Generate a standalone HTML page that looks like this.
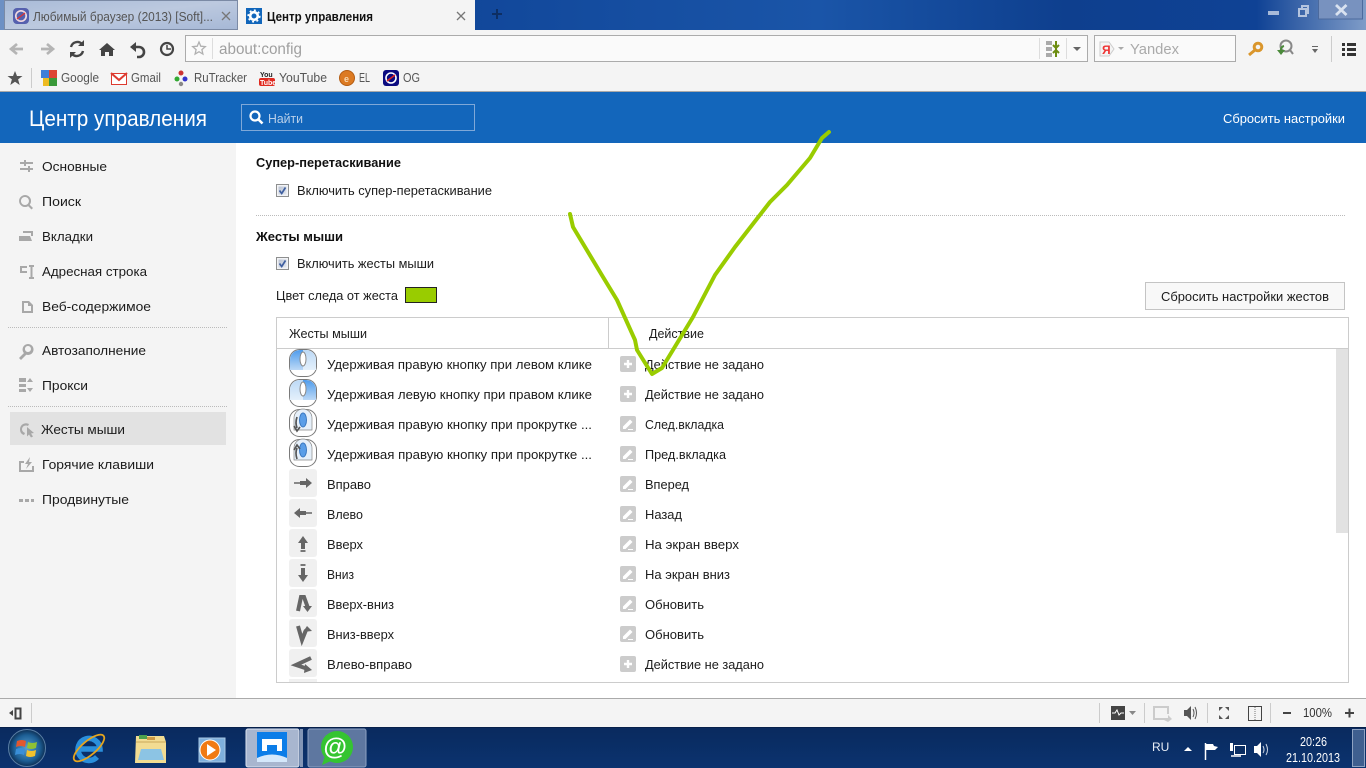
<!DOCTYPE html>
<html lang="ru"><head><meta charset="utf-8"><title>Центр управления</title>
<style>
html,body{margin:0;padding:0;width:1366px;height:768px;overflow:hidden;background:#fff}
svg{display:block}
text{font-family:"Liberation Sans","DejaVu Sans",sans-serif;font-size:13px;fill:#1c1c1c}
.b{font-size:12.5px;fill:#555}
.h{font-weight:bold;font-size:13px;fill:#111}
</style></head><body>
<svg width="1366" height="768" viewBox="0 0 1366 768" xmlns="http://www.w3.org/2000/svg">
<defs>
<linearGradient id="aero" x1="0" x2="1" y1="0" y2="0"><stop offset="0" stop-color="#6d90c4"/><stop offset=".004" stop-color="#6d90c4"/><stop offset=".34" stop-color="#11479a"/><stop offset=".6" stop-color="#1a55a8"/><stop offset=".78" stop-color="#0e3f8e"/><stop offset=".92" stop-color="#0f4295"/><stop offset="1" stop-color="#7f9cc8"/></linearGradient>
<linearGradient id="tab1" x1="0" x2="1" y1="0" y2="1"><stop offset="0" stop-color="#a9bbd8"/><stop offset=".5" stop-color="#bcc9df"/><stop offset="1" stop-color="#a6b8d6"/></linearGradient>
<linearGradient id="tb" x1="0" x2="0" y1="0" y2="1"><stop offset="0" stop-color="#0a2a5e"/><stop offset="1" stop-color="#0b336f"/></linearGradient>
<radialGradient id="orb"><stop offset="0" stop-color="#5aa0d0"/><stop offset=".7" stop-color="#1d5f95"/><stop offset="1" stop-color="#0d2f55"/></radialGradient>
<linearGradient id="m1" x1="0" x2="0" y1="0" y2="1"><stop offset="0" stop-color="#4f9cec"/><stop offset="1" stop-color="#bcd9f6"/></linearGradient>
<linearGradient id="m2" x1="0" x2="0" y1="0" y2="1"><stop offset="0" stop-color="#bcd9f6"/><stop offset="1" stop-color="#e4f0fb"/></linearGradient>
<linearGradient id="ckb" x1="0" x2="1" y1="0" y2="1"><stop offset="0" stop-color="#b9c2d2"/><stop offset="1" stop-color="#e4e8ef"/></linearGradient>
<g id="plus"><rect width="16" height="16" rx="2" fill="#ccc"/><path d="M8 4v8M4 8h8" stroke="#fff" stroke-width="2.4"/></g>
<g id="edit"><rect width="16" height="16" rx="2" fill="#ccc"/><path d="M3 10.500l7-7 2.500 2.500-7 7H3z" fill="#fff"/><path d="M8 13.500h5" stroke="#fff"/></g>
<g id="tile"><rect width="28" height="28" rx="3" fill="#f0f0f0"/></g>
<g id="chk"><rect x=".5" y=".5" width="12" height="12" fill="#f2f3f6" stroke="#8e8f8f"/><rect x="2.500" y="2.500" width="8" height="8" fill="url(#ckb)"/><path d="M3.500 6.500l2.200 3 3.800-6" fill="none" stroke="#3f5fa0" stroke-width="1.700"/></g>
<g id="mouse"><rect x=".5" y=".5" width="27" height="27" rx="10" fill="#fff" stroke="#7a7a7a"/></g>
<g id="oval"><ellipse cx="14" cy="10" rx="3" ry="7" fill="#fff" stroke="#888"/></g>
</defs>

<!-- title / tab strip -->
<rect width="1366" height="30" fill="url(#aero)"/>
<rect x="1318.500" y="-1" width="44" height="20" fill="#7892bf" stroke="#4c6a9d"/>
<path d="M1268 11h11v4h-11z" fill="#a8bad8"/>
<path d="M1299 9h7v7h-7zM1302 9V6h6v7h-2" fill="none" stroke="#b4c4de" stroke-width="2"/>
<path d="M1336 5l10.500 10M1346.500 5l-10.500 10" stroke="#d9e2f0" stroke-width="2.800"/>
<rect x="4.500" y=".5" width="233" height="29" fill="url(#tab1)" stroke="#7b8aa5"/>
<rect x="238" y="0" width="237" height="30" fill="#f4f4f4"/>
<rect x="13" y="8" width="16" height="16" rx="4" fill="#5560ae"/><circle cx="21" cy="16" r="5.200" fill="none" stroke="#f1d9e0" stroke-width="1.700"/><path d="M17 19l8-6" stroke="#d33" stroke-width="1.300"/>
<text x="33" y="21" textLength="180" lengthAdjust="spacingAndGlyphs" style="fill:#555">Любимый браузер (2013) [Soft]...</text>
<path d="M222 12l8 8M230 12l-8 8" stroke="#777" stroke-width="1.300"/>
<rect x="246" y="8" width="16" height="16" fill="#1166bb"/><circle cx="254" cy="16" r="3.800" fill="none" stroke="#fff" stroke-width="2.600"/><circle cx="254" cy="16" r="5.800" fill="none" stroke="#fff" stroke-width="1.600" stroke-dasharray="2 2.500"/>
<text x="267" y="21" textLength="106" lengthAdjust="spacingAndGlyphs" style="font-size:12.5px;fill:#111;font-weight:bold">Центр управления</text>
<path d="M457 12l8 8M465 12l-8 8" stroke="#777" stroke-width="1.300"/>
<path d="M497 9v10M492 14h10" stroke="#0d2e63" stroke-width="2"/>

<!-- nav toolbar -->
<rect y="30" width="1366" height="61" fill="#f4f4f4"/>
<rect y="91" width="1366" height="1" fill="#a9a9a9"/>
<path d="M23 49H13M17 44l-6 5 6 5" fill="none" stroke="#b4b4b4" stroke-width="2.700"/>
<path d="M41 49h10M47 44l6 5-6 5" fill="none" stroke="#b4b4b4" stroke-width="2.700"/>
<path d="M71 47a6.500 6.500 0 0 1 11-3M83 51a6.500 6.500 0 0 1-11 3" fill="none" stroke="#444" stroke-width="2.400"/><path d="M84 40v6h-6zM70 58v-6h6z" fill="#444"/>
<path d="M99 50l8-7 8 7h-2v6h-4v-4h-4v4h-4v-6z" fill="#444"/>
<path d="M132 47h7a5 5 0 0 1 0 10h-2" fill="none" stroke="#444" stroke-width="2.600"/><path d="M130 47l6-5v10z" fill="#444"/>
<circle cx="167" cy="49" r="6" fill="none" stroke="#444" stroke-width="2.200"/><path d="M167 45v4h4" fill="none" stroke="#444" stroke-width="1.500"/>
<rect x="185.500" y="35.500" width="902" height="26" fill="#fafafa" stroke="#ababab"/>
<path d="M199 42l1.800 4.200 4.500.4-3.400 3 1 4.400-3.900-2.300-3.900 2.300 1-4.400-3.400-3 4.500-.4z" fill="none" stroke="#b0b0b0" stroke-width="1.300"/>
<path d="M212.500 38v21M1039.500 38v21M1066.500 38v21" stroke="#ddd"/>
<text x="219" y="54" textLength="83" lengthAdjust="spacingAndGlyphs" style="font-size:16px;fill:#a0a0a0">about:config</text>
<path d="M1046 41h6v4h-6zM1046 47h6v4h-6zM1046 53h6v4h-6z" fill="#aaa"/><path d="M1056 41v16M1053 45l3 3 3-3M1053 53l3-3 3 3" fill="none" stroke="#6c8c10" stroke-width="2"/>
<path d="M1073 47h8l-4 4z" fill="#666"/>
<rect x="1094.500" y="35.500" width="141" height="26" fill="#fafafa" stroke="#ababab"/>
<path d="M1100 42h9l5 7-5 7h-9z" fill="#f4f4f4" stroke="#ccc"/>
<text x="1102" y="54" style="font-size:12px;fill:#e33;font-weight:bold">Я</text>
<path d="M1118 47h6l-3 3z" fill="#aaa"/>
<text x="1130" y="54" textLength="49" lengthAdjust="spacingAndGlyphs" style="font-size:15px;fill:#aaa">Yandex</text>
<circle cx="1258" cy="47" r="3.800" fill="none" stroke="#da962c" stroke-width="3"/><path d="M1255 50l-6 5" stroke="#da962c" stroke-width="3"/>
<circle cx="1286" cy="46" r="5.500" fill="none" stroke="#888" stroke-width="2"/><path d="M1290 50l3 4" stroke="#888" stroke-width="2"/><path d="M1284 46a4 4 0 0 0-3 5" fill="none" stroke="#4a8a3a" stroke-width="2"/><path d="M1277 50h8l-4 5z" fill="#4a8a3a"/>
<path d="M1312 46h6v1h-6zM1312 49h6l-3 4z" fill="#666"/>
<path d="M1331.500 36v26" stroke="#ccc"/>
<path d="M1342 43h3v3h-3zM1347 43h9v3h-9zM1342 48h3v3h-3zM1347 48h9v3h-9zM1342 53h3v3h-3zM1347 53h9v3h-9z" fill="#333"/>
<path d="M15 71l2 5h5.500l-4.400 3.400 1.600 5.600-4.700-3.200-4.700 3.200 1.600-5.600-4.400-3.400h5.500z" fill="#555"/>
<path d="M31.500 68v20" stroke="#ccc"/>
<path d="M41 70h8v8h-8z" fill="#3f7fd8"/><path d="M49 70h8v8h-8z" fill="#dd4433"/><path d="M49 78h8v8h-8z" fill="#3a9a3a"/><path d="M43 78h6v8h-6z" fill="#eebb22"/>
<text x="61" y="82" textLength="38" lengthAdjust="spacingAndGlyphs" class="b">Google</text>
<rect x="111.500" y="73.500" width="15" height="11" fill="#fff" stroke="#dd3b30"/><path d="M111 73l8 7 8-7" fill="none" stroke="#dd3b30" stroke-width="2"/>
<text x="131" y="82" textLength="30" lengthAdjust="spacingAndGlyphs" class="b">Gmail</text>
<circle cx="181" cy="73" r="2.500" fill="#c33"/><circle cx="177" cy="79" r="2.500" fill="#3a3"/><circle cx="185" cy="79" r="2.500" fill="#33c"/><circle cx="181" cy="84" r="2.200" fill="#888"/>
<text x="194" y="82" textLength="53" lengthAdjust="spacingAndGlyphs" class="b">RuTracker</text>
<rect x="259" y="78" width="16" height="8" rx="2" fill="#e02a20"/><text x="260" y="77" style="font-size:7px;fill:#222;font-weight:bold">You</text><text x="260" y="85" style="font-size:7px;fill:#fff;font-weight:bold">Tube</text>
<text x="279" y="82" textLength="48" lengthAdjust="spacingAndGlyphs" class="b">YouTube</text>
<circle cx="347" cy="78" r="7.500" fill="#dc7a22" stroke="#b35c12"/><text x="344" y="82" style="font-size:9px;fill:#f8d8b0;font-weight:bold">e</text>
<text x="359" y="82" textLength="11" lengthAdjust="spacingAndGlyphs" class="b">EL</text>
<rect x="383" y="70" width="16" height="16" rx="3" fill="#0b0b80"/><circle cx="391" cy="78" r="5" fill="none" stroke="#fff" stroke-width="1.600"/><path d="M387 81l8-6" stroke="#d22" stroke-width="1.500"/>
<text x="403" y="82" textLength="17" lengthAdjust="spacingAndGlyphs" class="b">OG</text>

<!-- blue header -->
<rect y="92" width="1366" height="51" fill="#1366bb"/>
<text x="29" y="126" textLength="178" lengthAdjust="spacingAndGlyphs" style="font-size:22px;fill:#fff">Центр управления</text>
<rect x="241.500" y="104.500" width="233" height="26" fill="#1366bb" stroke="#7fa8d8"/>
<circle cx="255" cy="116" r="4.500" fill="none" stroke="#fff" stroke-width="2.200"/><path d="M258.500 119.500l4 4" stroke="#fff" stroke-width="2.600"/>
<text x="268" y="123" textLength="35" lengthAdjust="spacingAndGlyphs" style="font-size:13px;fill:#b9d0ea">Найти</text>
<text x="1223" y="123" textLength="122" lengthAdjust="spacingAndGlyphs" style="fill:#fff">Сбросить настройки</text>

<!-- sidebar -->
<rect y="143" width="236" height="555" fill="#f4f4f4"/>
<rect x="10" y="412" width="216" height="33" fill="#e2e2e2"/>
<path d="M8 327.500h220M8 406.500h220" stroke="#bbb" stroke-dasharray="1 1"/>
<g fill="#a8a8a8" stroke="none">
<path d="M20 162h4v-2h2v2h7v2h-7v2h-2v-2h-4zM20 168h8v-2h2v2h3v2h-3v2h-2v-2h-8z"/>
<path d="M25 195a6 6 0 1 0 .1 0zM25 197a4 4 0 1 1-.1 0z" fill-rule="evenodd"/><path d="M29 204l4 4-1.500 1.500-4-4z"/>
<path d="M23 231h10v5h-2v-3h-8zM19 236h11l2 5H19z"/>
<path d="M20 266h7v2h-5v3h5v2h-7zM29 265h5v2h-1.500v10H34v2h-5v-2h1.500V267H29z"/>
<path d="M22 301h7l4 4v8H22zM24 303v8h7v-5h-3v-3z" fill-rule="evenodd"/>
<path d="M28 344a5.500 5.500 0 1 0 .1 0zM28 346a3 3 0 1 1-.1 0z" fill-rule="evenodd"/><path d="M25 352l-6 6 2 2 6-6z"/>
<path d="M19 378h7v4h-7zM19 384h7v3h-7zM19 389h7v3h-7zM30 378l3 4h-6zM30 392l3-4h-6z"/>
<path d="M20 429a6 6 0 0 1 9-5l-1 2a4 4 0 0 0-6 3c0 2 1 3 3 4l-1 2c-3-1-4-3-4-6z"/><path d="M27 427l7 6-3 .5 2 3-2 1-2-3-2 2z"/>
<path d="M19 461h5v2h-3v7h11v-4h2v6H19z"/><path d="M30 457l-5 7h3l-2 5 6-7h-3z"/>
<path d="M19 499h4v3h-4zM25 499h4v3h-4zM31 499h3v3h-3z"/>
</g>
<text x="42" y="171" textLength="65" lengthAdjust="spacingAndGlyphs">Основные</text>
<text x="42" y="206" textLength="39" lengthAdjust="spacingAndGlyphs">Поиск</text>
<text x="42" y="241" textLength="51" lengthAdjust="spacingAndGlyphs">Вкладки</text>
<text x="42" y="276" textLength="105" lengthAdjust="spacingAndGlyphs">Адресная строка</text>
<text x="42" y="311" textLength="109" lengthAdjust="spacingAndGlyphs">Веб-содержимое</text>
<text x="42" y="355" textLength="104" lengthAdjust="spacingAndGlyphs">Автозаполнение</text>
<text x="42" y="390" textLength="46" lengthAdjust="spacingAndGlyphs">Прокси</text>
<text x="41" y="434" textLength="84" lengthAdjust="spacingAndGlyphs">Жесты мыши</text>
<text x="42" y="469" textLength="112" lengthAdjust="spacingAndGlyphs">Горячие клавиши</text>
<text x="42" y="504" textLength="87" lengthAdjust="spacingAndGlyphs">Продвинутые</text>

<!-- main -->
<text x="256" y="167" textLength="145" lengthAdjust="spacingAndGlyphs" class="h">Супер-перетаскивание</text>
<use href="#chk" x="276" y="184"/>
<text x="297" y="195" textLength="195" lengthAdjust="spacingAndGlyphs">Включить супер-перетаскивание</text>
<path d="M256 215.500h1089" stroke="#bbb" stroke-dasharray="1 1"/>
<text x="256" y="241" textLength="87" lengthAdjust="spacingAndGlyphs" class="h">Жесты мыши</text>
<use href="#chk" x="276" y="257"/>
<text x="297" y="268" textLength="137" lengthAdjust="spacingAndGlyphs">Включить жесты мыши</text>
<text x="276" y="300" textLength="122" lengthAdjust="spacingAndGlyphs">Цвет следа от жеста</text>
<rect x="405.500" y="287.500" width="31" height="15" fill="#99cc00" stroke="#222"/>
<rect x="1145.500" y="282.500" width="199" height="27" fill="#f8f8f8" stroke="#c4c4c4"/>
<text x="1161" y="301" textLength="168" lengthAdjust="spacingAndGlyphs">Сбросить настройки жестов</text>

<!-- table -->
<rect x="276.500" y="317.500" width="1072" height="365" fill="#fff" stroke="#ccc"/>
<path d="M277 348.500h1071M608.500 318v30" stroke="#ccc"/>
<text x="289" y="338" textLength="78" lengthAdjust="spacingAndGlyphs">Жесты мыши</text>
<text x="649" y="338" textLength="55" lengthAdjust="spacingAndGlyphs">Действие</text>
<rect x="1336" y="349" width="12" height="184" fill="#e2e2e2"/>

<!-- row icons -->
<g transform="translate(289 349)"><use href="#mouse"/><path d="M1 21V11A10 10 0 0 1 11 1h3v20z" fill="url(#m1)"/><path d="M14 1h3a10 10 0 0 1 10 10v10H14z" fill="url(#m2)"/><use href="#oval"/></g>
<g transform="translate(289 379)"><use href="#mouse"/><path d="M1 21V11A10 10 0 0 1 11 1h3v20z" fill="url(#m2)"/><path d="M14 1h3a10 10 0 0 1 10 10v10H14z" fill="url(#m1)"/><use href="#oval"/></g>
<g transform="translate(289 409)"><use href="#mouse"/><path d="M5 21V9a9 9 0 0 1 18 0v12z" fill="#e6f0fa" stroke="#888" stroke-width=".7"/><ellipse cx="14" cy="11" rx="3.500" ry="7" fill="#5a9ee8" stroke="#3a78c0"/><path d="M8 8q-2 6 0 11M5 17l3 5 3-4" fill="none" stroke="#555" stroke-width="1.700"/></g>
<g transform="translate(289 439)"><use href="#mouse"/><path d="M5 21V9a9 9 0 0 1 18 0v12z" fill="#e6f0fa" stroke="#888" stroke-width=".7"/><ellipse cx="14" cy="11" rx="3.500" ry="7" fill="#5a9ee8" stroke="#3a78c0"/><path d="M8 20q-2-6 0-11M5 11l3-5 3 4" fill="none" stroke="#555" stroke-width="1.700"/></g>
<use href="#tile" x="289" y="469"/><path d="M294 482h6v2h-6z" fill="#888"/><path d="M300 481h6v-3l6 5-6 5v-3h-6z" fill="#666"/>
<use href="#tile" x="289" y="499"/><path d="M306 512h6v2h-6z" fill="#888"/><path d="M306 511h-6v-3l-6 5 6 5v-3h6z" fill="#666"/>
<use href="#tile" x="289" y="529"/><path d="M301 543h-3l5-7 5 7h-3v6h-4z" fill="#666"/><path d="M300.500 551h5" stroke="#777" stroke-width="2"/>
<use href="#tile" x="289" y="559"/><path d="M300.500 565h5" stroke="#777" stroke-width="2"/><path d="M301 568h4v7h3l-5 7-5-7h3z" fill="#666"/>
<use href="#tile" x="289" y="589"/><path d="M298 611l3-14h3l4 11" fill="none" stroke="#666" stroke-width="4"/><path d="M303 606h9l-4.500 6z" fill="#666"/>
<use href="#tile" x="289" y="619"/><path d="M298 626l4 14 4-10" fill="none" stroke="#666" stroke-width="4"/><path d="M303 632l4-6 5 5z" fill="#666"/>
<use href="#tile" x="289" y="649"/><path d="M311 658l-15 7 12 4" fill="none" stroke="#666" stroke-width="4"/><path d="M305 664l7 6-8 3z" fill="#666"/>
<rect x="289" y="679" width="28" height="3" fill="#f0f0f0"/>

<text x="327" y="369" textLength="265" lengthAdjust="spacingAndGlyphs">Удерживая правую кнопку при левом клике</text>
<text x="327" y="399" textLength="265" lengthAdjust="spacingAndGlyphs">Удерживая левую кнопку при правом клике</text>
<text x="327" y="429" textLength="265" lengthAdjust="spacingAndGlyphs">Удерживая правую кнопку при прокрутке ...</text>
<text x="327" y="459" textLength="265" lengthAdjust="spacingAndGlyphs">Удерживая правую кнопку при прокрутке ...</text>
<text x="327" y="489" textLength="44" lengthAdjust="spacingAndGlyphs">Вправо</text>
<text x="327" y="519" textLength="36" lengthAdjust="spacingAndGlyphs">Влево</text>
<text x="327" y="549" textLength="36" lengthAdjust="spacingAndGlyphs">Вверх</text>
<text x="327" y="579" textLength="27" lengthAdjust="spacingAndGlyphs">Вниз</text>
<text x="327" y="609" textLength="67" lengthAdjust="spacingAndGlyphs">Вверх-вниз</text>
<text x="327" y="639" textLength="67" lengthAdjust="spacingAndGlyphs">Вниз-вверх</text>
<text x="327" y="669" textLength="85" lengthAdjust="spacingAndGlyphs">Влево-вправо</text>

<use href="#plus" x="620" y="356"/><use href="#plus" x="620" y="386"/>
<use href="#edit" x="620" y="416"/><use href="#edit" x="620" y="446"/><use href="#edit" x="620" y="476"/><use href="#edit" x="620" y="506"/><use href="#edit" x="620" y="536"/><use href="#edit" x="620" y="566"/><use href="#edit" x="620" y="596"/><use href="#edit" x="620" y="626"/>
<use href="#plus" x="620" y="656"/>
<text x="645" y="369" textLength="119" lengthAdjust="spacingAndGlyphs">Действие не задано</text>
<text x="645" y="399" textLength="119" lengthAdjust="spacingAndGlyphs">Действие не задано</text>
<text x="645" y="429" textLength="79" lengthAdjust="spacingAndGlyphs">След.вкладка</text>
<text x="645" y="459" textLength="81" lengthAdjust="spacingAndGlyphs">Пред.вкладка</text>
<text x="645" y="489" textLength="44" lengthAdjust="spacingAndGlyphs">Вперед</text>
<text x="645" y="519" textLength="37" lengthAdjust="spacingAndGlyphs">Назад</text>
<text x="645" y="549" textLength="94" lengthAdjust="spacingAndGlyphs">На экран вверх</text>
<text x="645" y="579" textLength="85" lengthAdjust="spacingAndGlyphs">На экран вниз</text>
<text x="645" y="609" textLength="59" lengthAdjust="spacingAndGlyphs">Обновить</text>
<text x="645" y="639" textLength="59" lengthAdjust="spacingAndGlyphs">Обновить</text>
<text x="645" y="669" textLength="119" lengthAdjust="spacingAndGlyphs">Действие не задано</text>

<!-- status bar -->
<rect y="698" width="1366" height="29" fill="#f4f4f4"/>
<rect y="698" width="1366" height="1" fill="#aaa"/>
<path d="M9 713l4-3v6z" fill="#444"/><rect x="15.500" y="708.500" width="5" height="10" fill="none" stroke="#444" stroke-width="2"/>
<path d="M31.500 703v20M1099.500 703v20M1144.500 703v20M1207.500 703v20M1270.500 703v20" stroke="#ccc"/>
<rect x="1111" y="706" width="14" height="14" fill="#444"/><path d="M1112 713h3l2-3 2 5 2-2h3" fill="none" stroke="#fff"/>
<path d="M1129 711h7l-3.500 4z" fill="#888"/>
<path d="M1166 719h-12v-12h14v7" fill="none" stroke="#ccc" stroke-width="2"/><path d="M1160 718h8v-3l4 4-4 3z" fill="#ccc"/>
<path d="M1184 710h3l4-4v14l-4-4h-3z" fill="#555"/><path d="M1193 709q2 4 0 8M1195 707q3 6 0 12" fill="none" stroke="#555"/>
<path d="M1219 707h4l-4 4zM1229 707h-4l4 4zM1219 719h4l-4-4zM1229 719h-4l4-4z" fill="#555"/>
<rect x="1248.500" y="706.500" width="13" height="14" fill="none" stroke="#444"/><path d="M1255 707v13" stroke="#777" stroke-dasharray="1 1"/>
<path d="M1283 713h8" stroke="#444" stroke-width="2"/>
<text x="1303" y="717" textLength="29" lengthAdjust="spacingAndGlyphs" style="font-size:12.5px;fill:#333">100%</text>
<path d="M1345 713h9M1349.500 708.500v9" stroke="#444" stroke-width="2"/>

<!-- taskbar -->
<rect y="727" width="1366" height="41" fill="url(#tb)"/>
<rect y="727" width="1366" height="1" fill="#07204a"/>
<circle cx="27" cy="748" r="18.500" fill="url(#orb)" stroke="#5a7fa5"/>
<path d="M17 741q5-2 9 0l-1 6q-4-2-9 0z" fill="#e2572e"/><path d="M28 742q4 2 9 0l-1 6q-5 2-9 0z" fill="#8fc234"/><path d="M16 749q5-2 9 0l-1 6q-4-2-9 0z" fill="#3a8fd8"/><path d="M27 750q4 2 9 0l-1 6q-5 2-9 0z" fill="#f3c22c"/>
<path d="M79 749h21a11 11 0 1 0-3 8" fill="none" stroke="#2a8fdc" stroke-width="5.500"/>
<ellipse cx="89" cy="748" rx="19" ry="7" fill="none" stroke="#e6a51e" stroke-width="1.800" transform="rotate(-40 89 748)"/>
<path d="M136 736h28l2 6v21h-31z" fill="#f2dc92"/><path d="M136 742h30" stroke="#c9a95a"/><path d="M141 749h20l3 11h-26z" fill="#8cc4e4"/><path d="M139 735h8v4h-8z" fill="#4da04d"/><path d="M147 737h8v3h-8z" fill="#c94"/>
<rect x="199" y="738" width="26" height="24" fill="#7fb0dc" stroke="#a8c8e4"/><circle cx="210" cy="750" r="10" fill="#f07a14" stroke="#fff"/><path d="M207 744l9 6-9 6z" fill="#fff"/>
<rect x="246" y="729" width="53" height="38" rx="2" fill="#a8b6cf" stroke="#dce3ef"/>
<rect x="300" y="729" width="3" height="38" fill="#8396b6"/>
<rect x="257" y="732" width="30" height="30" fill="#0c7de8"/><path d="M262 751v-12h20v12h-5v-6h-10v6z" fill="#fff"/><path d="M257 758q15-7 30 0v4h-30z" fill="#d5e8fb"/>
<rect x="308" y="729" width="58" height="38" rx="2" fill="#5e77a0" stroke="#8ea2c2"/>
<circle cx="337" cy="747" r="16" fill="#35c431"/><path d="M325 756l-3 9 9-4z" fill="#35c431"/>
<text x="323.500" y="755" style="font-size:24px;fill:#fff;font-weight:bold">@</text>
<text x="1152" y="751" style="font-size:12px;fill:#e8eef6">RU</text>
<path d="M1184 751l4-4 4 4z" fill="#fff"/>
<path d="M1205.500 743v17" stroke="#fff" stroke-width="1.500"/><path d="M1206 744h7l1 2 4 1-3 3h-9z" fill="#fff"/>
<path d="M1230 743h3v8h-3z" fill="#fff"/><rect x="1234.500" y="745.500" width="11" height="9" fill="#0a2d62" stroke="#fff"/><path d="M1231 756h10" stroke="#fff" stroke-width="1.500"/>
<path d="M1254 746h3l4-4v15l-4-4h-3z" fill="#fff"/><path d="M1263 746q2 4 0 7M1266 744q3 6 0 11" fill="none" stroke="#cfd8e6"/>
<text x="1300" y="746" textLength="27" lengthAdjust="spacingAndGlyphs" style="font-size:12.5px;fill:#fff">20:26</text>
<text x="1286" y="762" textLength="54" lengthAdjust="spacingAndGlyphs" style="font-size:12.5px;fill:#fff">21.10.2013</text>
<rect x="1352.500" y="729.500" width="12" height="37" fill="#3f5f8f" stroke="#8fa3c2"/>

<!-- green gesture -->
<path d="M570 214l3 13 30 50 14 23 18 40 2 10 15 24 10-6 31-51 22-42 20-28 35-45 17-17 23-27 12-20 7-6" fill="none" stroke="#99cc00" stroke-width="4" stroke-linecap="round" stroke-linejoin="round"/>
</svg>
</body></html>
